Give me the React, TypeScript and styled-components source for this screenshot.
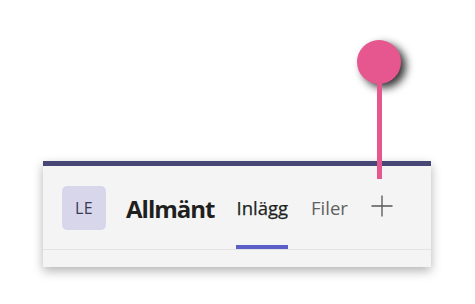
import React from "react";
import styled, { createGlobalStyle } from "styled-components";

const GlobalStyle = createGlobalStyle`
  html, body {
    margin: 0;
    padding: 0;
    background: #ffffff;
  }
  body {
    font-family: "Open Sans", "Noto Sans", Arial, sans-serif;
  }
`;

const Stage = styled.div`
  position: relative;
  width: 475px;
  height: 304px;
  box-sizing: border-box;
  padding: 161px 0 0 43px;
  overflow: hidden;
`;

const Panel = styled.div`
  width: 388px;
  background: #f4f4f4;
  border-top: 5px solid #464775;
  box-shadow: 0 4px 10px rgba(0, 0, 0, 0.3);
`;

const Header = styled.div`
  display: flex;
  align-items: stretch;
  height: 83px;
  padding-left: 19px;
  border-bottom: 1px solid #e3e3e3;
`;

const Avatar = styled.div`
  align-self: center;
  width: 44px;
  height: 44px;
  border-radius: 5px;
  background: #d8d6ea;
  color: #3a3a55;
  font-size: 16px;
  display: flex;
  align-items: center;
  justify-content: center;
  letter-spacing: 0.5px;
`;

const Title = styled.div`
  display: flex;
  align-items: center;
  margin: 0 22px 0 20px;
  padding-top: 1px;
  font-size: 24px;
  letter-spacing: -1px;
  font-weight: 700;
  color: #1f1f1f;
`;

const Tab = styled.div<{ $active?: boolean }>`
  display: flex;
  align-items: center;
  margin-right: 23px;
  padding-top: 3px;
  border-bottom: 4px solid ${(p) => (p.$active ? "#5b5fc7" : "transparent")};
  font-size: 18.5px;
  color: ${(p) => (p.$active ? "#201f1e" : "#616161")};
  -webkit-text-stroke: ${(p) => (p.$active ? "0.25px #201f1e" : "0")};
`;

const AddTab = styled.div`
  display: flex;
  align-items: center;
  padding-bottom: 4px;
  color: #555555;
`;

const Footer = styled.div`
  height: 17px;
`;

const Pin = styled.div`
  position: absolute;
  left: 357px;
  top: 40px;
  width: 44px;
  display: flex;
  flex-direction: column;
  align-items: center;
`;

const PinHead = styled.div`
  width: 44px;
  height: 44px;
  border-radius: 50%;
  background: #e6568f;
  box-shadow: 5px 4px 9px rgba(0, 0, 0, 0.8);
`;

const PinStem = styled.div`
  width: 5px;
  height: 98px;
  margin-top: -3px;
  background: #e6568f;
`;

export default function App() {
  return (
    <Stage>
      <GlobalStyle />
      <Panel>
        <Header>
          <Avatar>LE</Avatar>
          <Title>Allmänt</Title>
          <Tab $active>Inlägg</Tab>
          <Tab>Filer</Tab>
          <AddTab>
            <svg width="22" height="22" viewBox="0 0 22 22" fill="none">
              <path d="M11 0.5V21.5M0.5 11H21.5" stroke="#555555" strokeWidth="1.3" />
            </svg>
          </AddTab>
        </Header>
        <Footer />
      </Panel>
      <Pin>
        <PinHead />
        <PinStem />
      </Pin>
    </Stage>
  );
}
